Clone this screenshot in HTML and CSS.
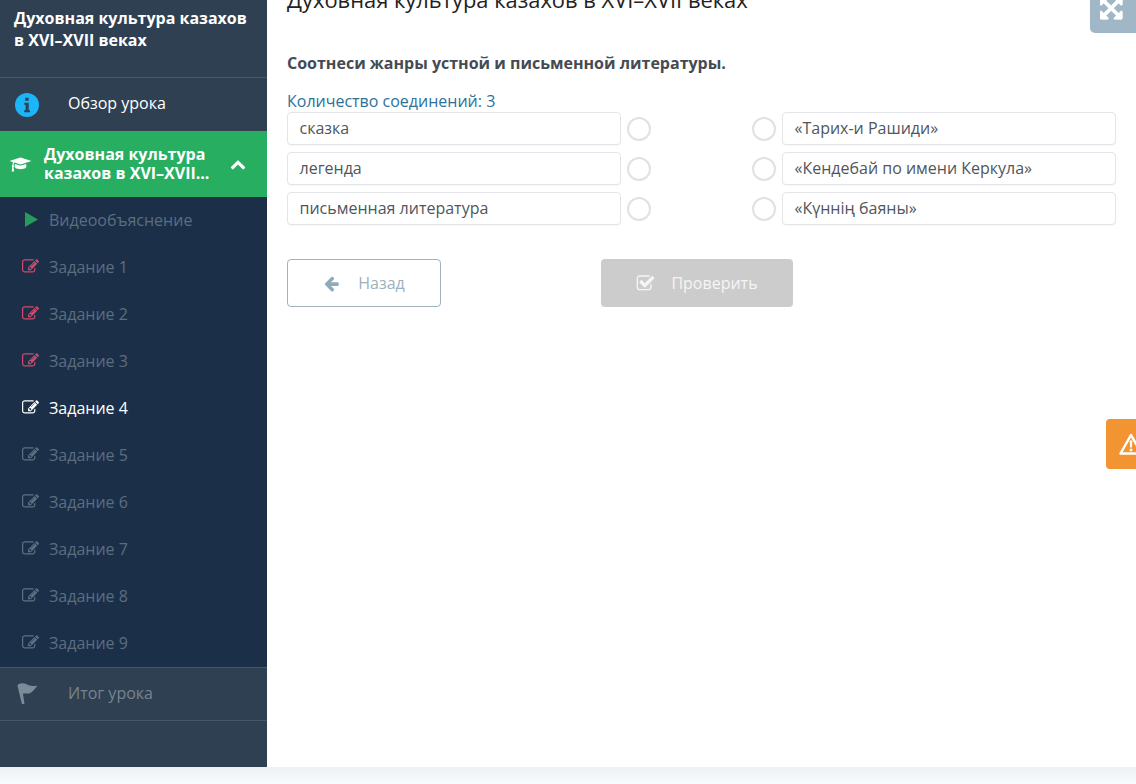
FILE: index.html
```html
<!DOCTYPE html>
<html lang="ru">
<head>
<meta charset="utf-8">
<title>Духовная культура казахов в XVI–XVII веках</title>
<link rel="stylesheet" href="styles.css">
</head>
<body>
<svg class="defs" width="0" height="0">
  <symbol id="edit" viewBox="0 0 1792 1792"><path d="M888 1184l116-116-152-152-116 116v56h96v96h56zm440-720q-16-16-33 1l-350 350q-17 17-1 33t33-1l350-350q17-17 1-33zm80 594v190q0 119-84.500 203.500t-203.500 84.500h-832q-119 0-203.500-84.500t-84.500-203.500v-832q0-119 84.500-203.500t203.500-84.500h832q63 0 117 25 15 7 18 23 3 17-9 29l-49 49q-14 14-32 8-23-6-45-6h-832q-66 0-113 47t-47 113v832q0 66 47 113t113 47h832q66 0 113-47t47-113v-126q0-13 9-22l64-64q15-15 35-7t20 29zm-96-738l288 288-672 672h-288v-288zm444 132l-92 92-288-288 92-92q28-28 68-28t68 28l152 152q28 28 28 68t-28 68z"/></symbol>
</svg>
<div class="page">
  <aside class="sidebar">
    <header class="lesson-title">Духовная культура казахов в XVI–XVII веках</header>
    <a class="top-item">
      <svg class="info-icon" viewBox="0 0 24 24"><circle class="info-disc" cx="12" cy="12" r="12"/><path class="info-i" d="M10.300 4.800h3.300v3h-3.300zM9.300 9.700h4.400v7.500h1.300v2H9.200v-2h1.400v-5.500H9.300z"/></svg>
      <span>Обзор урока</span>
    </a>
    <a class="section-item">
      <svg class="cap-icon" viewBox="0 0 2304 1792"><path d="M1774 836l18 316q4 69-82 128t-235 93.500-323 34.500-323-34.500-235-93.500-82-128l18-316 574 181q22 7 48 7t48-7zm530-324q0 23-22 31l-1120 352q-4 1-10 1t-10-1l-652-206q-43 34-71 111.500t-34 178.500q63 36 63 109 0 69-58 107l58 433q2 14-8 25-9 11-24 11h-192q-15 0-24-11-10-11-8-25l58-433q-58-38-58-107 0-73 65-111 11-207 98-330l-333-104q-22-8-22-31t22-31l1120-352q4-1 10-1t10 1l1120 352q22 8 22 31z"/></svg>
      <span class="section-name">Духовная культура казахов в XVI–XVII...</span>
      <svg class="chevron-icon" viewBox="0 0 1792 1792"><path d="M1683 1331l-166 165q-19 19-45 19t-45-19l-531-531-531 531q-19 19-45 19t-45-19l-166-165q-19-19-19-45.500t19-45.500l742-741q19-19 45-19t45 19l742 741q19 19 19 45.500t-19 45.500z"/></svg>
    </a>
    <ul class="sub-list">
      <li class="sub-item"><svg class="sub-icon play" viewBox="0 0 13 15"><path d="M0 0 13 7.500 0 15z"/></svg><span>Видеообъяснение</span></li>
      <li class="sub-item"><svg class="sub-icon failed"><use href="#edit"/></svg><span>Задание 1</span></li>
      <li class="sub-item"><svg class="sub-icon failed"><use href="#edit"/></svg><span>Задание 2</span></li>
      <li class="sub-item"><svg class="sub-icon failed"><use href="#edit"/></svg><span>Задание 3</span></li>
      <li class="sub-item current"><svg class="sub-icon"><use href="#edit"/></svg><span>Задание 4</span></li>
      <li class="sub-item"><svg class="sub-icon"><use href="#edit"/></svg><span>Задание 5</span></li>
      <li class="sub-item"><svg class="sub-icon"><use href="#edit"/></svg><span>Задание 6</span></li>
      <li class="sub-item"><svg class="sub-icon"><use href="#edit"/></svg><span>Задание 7</span></li>
      <li class="sub-item"><svg class="sub-icon"><use href="#edit"/></svg><span>Задание 8</span></li>
      <li class="sub-item"><svg class="sub-icon"><use href="#edit"/></svg><span>Задание 9</span></li>
    </ul>
    <a class="top-item summary">
      <svg class="flag-icon" viewBox="0 0 24 24"><path d="M2.200 2.600C5 .8 8.400 1 11 2.400c3 1.600 6 2.200 10 1.400.8 0 1 .6.500 1.200-2 2.400-4 5.200-6.400 6.400-2.600 1.200-5 .2-7.800.6L8.800 23H6.200L2.200 6.400 1.600 3.800c-.1-.5.200-.9.600-1.200z"/></svg>
      <span>Итог урока</span>
    </a>
  </aside>
  <main class="content">
    <h1 class="page-title">Духовная культура казахов в XVI–XVII веках</h1>
    <p class="question">Соотнеси жанры устной и письменной литературы.</p>
    <div class="count">Количество соединений: 3</div>
    <div class="match">
      <div class="match-row">
        <div class="side"><div class="option">сказка</div><span class="dot"></span></div>
        <div class="side"><span class="dot"></span><div class="option">«Тарих-и Рашиди»</div></div>
      </div>
      <div class="match-row">
        <div class="side"><div class="option">легенда</div><span class="dot"></span></div>
        <div class="side"><span class="dot"></span><div class="option">«Кендебай по имени Керкула»</div></div>
      </div>
      <div class="match-row">
        <div class="side"><div class="option">письменная литература</div><span class="dot"></span></div>
        <div class="side"><span class="dot"></span><div class="option">«Күннің баяны»</div></div>
      </div>
    </div>
    <div class="actions">
      <button class="btn back">
        <svg class="btn-icon" viewBox="0 0 1792 1792"><path d="M1664 896v128q0 53-32.500 90.500t-84.500 37.500h-704l293 294q38 36 38 90t-38 90l-75 76q-37 37-90 37-52 0-91-37l-651-652q-37-37-37-90 0-52 37-91l651-650q38-38 91-38 52 0 90 38l75 74q38 38 38 91t-38 91l-293 293h704q52 0 84.500 37.500t32.500 90.500z"/></svg>
        Назад
      </button>
      <button class="btn check">
        <svg class="btn-icon" viewBox="0 0 1792 1792"><path d="M1472 930v318q0 119-84.500 203.500t-203.500 84.500h-832q-119 0-203.500-84.500t-84.500-203.500v-832q0-119 84.500-203.500t203.500-84.500h832q63 0 117 25 15 7 18 23 3 17-9 29l-49 49q-10 10-23 10-3 0-9-2-23-6-45-6h-832q-66 0-113 47t-47 113v832q0 66 47 113t113 47h832q66 0 113-47t47-113v-254q0-13 9-22l64-64q10-10 23-10 6 0 12 3 20 8 20 29zm231-489l-814 814q-24 24-57 24t-57-24l-430-430q-24-24-24-57t24-57l110-110q24-24 57-24t57 24l263 263 647-647q24-24 57-24t57 24l110 110q24 24 24 57t-24 57z"/></svg>
        Проверить
      </button>
    </div>
    <button class="fullscreen" aria-label="Fullscreen">
      <svg viewBox="0 0 1792 1792"><path d="M1283 413l-355 355 355 355 144-144q29-31 70-14 39 17 39 59v448q0 26-19 45t-45 19h-448q-42 0-59-40-17-39 14-69l144-144-355-355-355 355 144 144q31 30 14 69-17 40-59 40h-448q-26 0-45-19t-19-45v-448q0-42 40-59 39-17 69 14l144 144 355-355-355-355-144 144q-19 19-45 19-12 0-24-5-40-17-40-59v-448q0-26 19-45t45-19h448q42 0 59 40 17 39-14 69l-144 144 355 355 355-355-144-144q-31-30-14-69 17-40 59-40h448q26 0 45 19t19 45v448q0 42-39 59-13 5-25 5-26 0-45-19z"/></svg>
    </button>
    <button class="report" aria-label="Report">
      <svg viewBox="0 0 24 22"><path class="tri" d="M12 2 22.500 20.500H1.500z"/><path class="mark" d="M10.600 7.500h2.800l-.5 7h-1.800zM10.700 15.700h2.600v2.500h-2.600z"/></svg>
    </button>
  </main>
</div>
<div class="strip"></div>
</body>
</html>
```

FILE: styles.css
```css
* { box-sizing: border-box; }
html, body { margin: 0; height: 784px; overflow: hidden; }
body { font-family: "Open Sans", "Noto Sans", sans-serif; font-size: 16px; color: #444b52; background: #fff; }
.defs { display: block; height: 0; }
.page { display: flex; height: 767px; }
.strip { height: 17px; background: linear-gradient(#eef1f4, #f8fafc); }

.sidebar { width: 267px; flex: none; display: flex; flex-direction: column; background: #2f4052; color: #fff; }
.lesson-title { height: 78px; padding: 7px 14px 0; font-weight: 700; line-height: 22px; border-bottom: 1px solid #46576a; }
.top-item { height: 53px; display: flex; align-items: center; padding: 0 0 3px 15px; }
.top-item span { margin-left: 29px; }
.info-icon { width: 24px; height: 24px; flex: none; margin-top: 3px; }
.info-disc { fill: #1cb5f8; }
.info-i { fill: #2b4257; }
.section-item { height: 66px; display: flex; align-items: center; padding-left: 10px; background: #27ae60; }
.cap-icon { width: 21px; height: 17px; fill: #fff; flex: none; }
.section-name { width: 176px; margin-left: 13px; font-weight: 700; line-height: 19px; }
.chevron-icon { width: 16px; height: 16px; fill: #fff; margin-left: 10px; flex: none; }
.sub-list { list-style: none; margin: 0; padding: 0; height: 470px; background: #1b3048; }
.sub-item { height: 47px; display: flex; align-items: center; padding: 0 0 2px 22px; color: #5c6d80; }
.sub-item span { margin-left: 10px; }
.sub-icon { width: 17px; height: 17px; flex: none; fill: #5f7083; }
.sub-icon.play { width: 13px; height: 15px; margin: 0 4px 0 3px; fill: #27ae60; opacity: .85; }
.sub-item .sub-icon.play + span { margin-left: 7px; }
.sub-icon.failed { fill: #cf4a6c; }
.sub-item.current { color: #fff; }
.sub-item.current .sub-icon { fill: #fff; }
.summary { border-top: 1px solid #46576a; border-bottom: 1px solid #46576a; height: 54px; color: #77848f; padding: 0 0 2px 16px; }
.summary span { margin-left: 29px; }
.flag-icon { width: 23px; height: 23px; fill: #7a8b99; flex: none; }

.content { position: relative; flex: 1; min-width: 0; overflow: hidden; padding: 0 20px; }
.page-title { margin: -14px 0 0; font-size: 21.900px; font-weight: 400; line-height: 27px; color: #222; white-space: nowrap; }
.question { margin: 39px 0 0; font-weight: 700; line-height: 22px; color: #444b52; }
.count { margin-top: 16px; line-height: 22px; color: #2d7199; }
.match { display: flex; flex-direction: column; gap: 7px; }
.match-row { display: flex; justify-content: space-between; }
.side { display: flex; align-items: center; gap: 6px; }
.option { width: 334px; height: 33px; padding: 0 11.500px; line-height: 31px; background: #fff; border: 1px solid #e3e5e8; border-radius: 4px; box-shadow: 0 1px 1px rgba(0,0,0,.04); color: #50565c; }
.dot { width: 24px; height: 24px; border: 2px solid #dfe1e3; border-radius: 50%; flex: none; }
.actions { display: flex; gap: 160px; margin-top: 34px; }
.btn { height: 48px; display: flex; align-items: center; justify-content: center; gap: 18px; font: inherit; border-radius: 4px; }
.btn-icon { width: 17px; height: 17px; flex: none; }
.back { width: 154px; background: #fff; border: 1px solid #9fb4c0; color: #9db1bc; }
.back .btn-icon { fill: #8fabbc; }
.check { width: 192px; gap: 16px; background: #ccc; border: 0; color: #f5f5f5; }
.check .btn-icon { width: 19px; height: 19px; fill: #f5f5f5; }
.fullscreen { position: absolute; top: -13px; right: 0; width: 46px; height: 46px; padding: 0; border: 0; border-radius: 0 0 0 5px; background: #a0b7c7; display: flex; align-items: center; justify-content: center; }
.fullscreen svg { width: 26px; height: 26px; fill: #fff; stroke: #fff; stroke-width: 50; }
.report { position: absolute; top: 419px; right: 0; width: 30px; height: 50px; padding: 0 0 0 13px; border: 0; border-radius: 4px 0 0 4px; background: #f39433; display: flex; align-items: center; overflow: hidden; }
.report svg { width: 24px; height: 22px; flex: none; }
.report .tri { fill: none; stroke: #fff; stroke-width: 2.500; stroke-linejoin: round; }
.report .mark { fill: #fff; }
```
